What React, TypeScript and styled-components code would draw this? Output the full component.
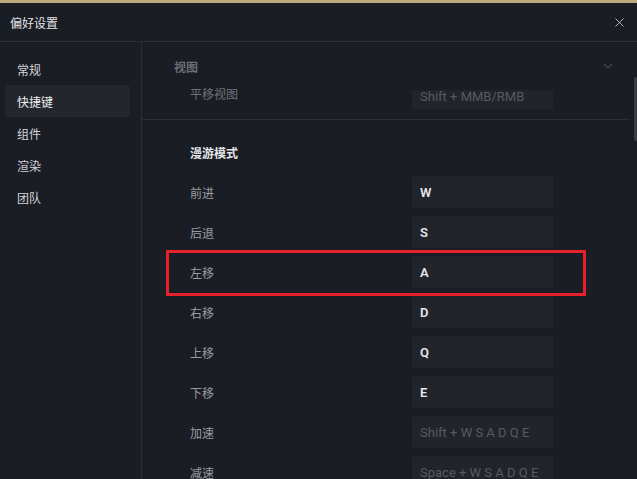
import React from 'react';
import styled, { createGlobalStyle } from 'styled-components';
import { ChevronDown, X } from 'lucide-react';

const GlobalStyle = createGlobalStyle`
  html, body {
    margin: 0;
    padding: 0;
    background: #1b1d25;
    overflow: hidden;
  }
  * {
    box-sizing: border-box;
  }
`;

const Window = styled.div`
  width: 637px;
  height: 479px;
  display: flex;
  flex-direction: column;
  background: #1b1d25;
  font-family: Roboto, "Noto Sans CJK SC", sans-serif;
  font-size: 12px;
  color: #d4d6da;
  overflow: hidden;
`;

const TopStrip = styled.div`
  height: 3px;
  background: #bcaa7b;
  flex-shrink: 0;
`;

const Header = styled.div`
  height: 39px;
  flex-shrink: 0;
  display: flex;
  align-items: center;
  justify-content: space-between;
  padding: 0 10px;
  border-bottom: 1px solid #2b2e36;
  color: #e2e3e6;
  font-size: 12px;
`;

const CloseButton = styled.button`
  display: flex;
  align-items: center;
  justify-content: center;
  background: none;
  border: none;
  padding: 0;
  color: #c9cacd;
  cursor: pointer;
`;

const Body = styled.div`
  flex: 1;
  display: flex;
  min-height: 0;
`;

const Sidebar = styled.div`
  width: 142px;
  flex-shrink: 0;
  border-right: 1px solid #2b2e36;
  padding: 11px 11px 0 5px;
  display: flex;
  flex-direction: column;
`;

const NavItem = styled.div<{ $active?: boolean }>`
  height: 32px;
  display: flex;
  align-items: center;
  padding-left: 12px;
  border-radius: 4px;
  background: ${(p) => (p.$active ? '#24262e' : 'transparent')};
  color: ${(p) => (p.$active ? '#eceef0' : '#d2d4d8')};
  font-size: 12px;
`;

const Content = styled.div`
  flex: 1;
  position: relative;
  display: flex;
  flex-direction: column;
  overflow: hidden;
`;

const SectionHeader = styled.div`
  height: 48px;
  flex-shrink: 0;
  display: flex;
  align-items: center;
  justify-content: space-between;
  padding: 0 22px 0 32px;
  color: #6c6f77;
  font-weight: 700;
  font-size: 12px;
`;

const Group = styled.div<{ $divider?: boolean }>`
  display: flex;
  flex-direction: column;
  gap: 8px;
  padding-bottom: 9px;
  margin-right: 7px;
  border-bottom: ${(p) => (p.$divider ? '1px solid #2b2e36' : 'none')};
`;

const GroupTitle = styled.div`
  height: 16px;
  display: flex;
  align-items: center;
  padding-left: 48px;
  margin: 24px 0 16px;
  color: #e4e5e8;
  font-weight: 700;
  font-size: 12px;
`;

/* $cut: the row is half scrolled under the sticky section header */
const Row = styled.div<{ $cut?: boolean }>`
  height: ${(p) => (p.$cut ? '20px' : '32px')};
  flex-shrink: 0;
  display: flex;
  align-items: ${(p) => (p.$cut ? 'flex-start' : 'center')};
  padding-left: 48px;
`;

const Label = styled.div<{ $cut?: boolean }>`
  width: 222px;
  color: ${(p) => (p.$cut ? '#6f727a' : '#9b9da3')};
  font-size: 12px;
  line-height: ${(p) => (p.$cut ? '12px' : 'normal')};
  margin-top: ${(p) => (p.$cut ? '-1px' : '0')};
`;

const KeyBox = styled.div<{ $placeholder?: boolean; $cut?: boolean }>`
  width: 141px;
  height: ${(p) => (p.$cut ? '20px' : '32px')};
  display: flex;
  align-items: ${(p) => (p.$cut ? 'flex-start' : 'center')};
  padding-left: 8px;
  border-radius: ${(p) => (p.$cut ? '0 0 2px 2px' : '2px')};
  background: #22242c;
  color: ${(p) => (p.$placeholder ? '#575a62' : '#e6e7ea')};
  font-weight: ${(p) => (p.$placeholder ? 400 : 600)};
  font-size: 13px;
  line-height: ${(p) => (p.$cut ? '13px' : 'normal')};
  white-space: nowrap;
`;

const Highlight = styled.div`
  position: absolute;
  left: 24px;
  top: 208px;
  width: 420px;
  height: 46px;
  border: 3px solid #e5222b;
  pointer-events: none;
`;

const ScrollThumb = styled.div`
  position: absolute;
  right: 0;
  top: 35px;
  width: 3px;
  height: 64px;
  border-radius: 2px;
  background: #3a3d45;
`;

const navItems = ['常规', '快捷键', '组件', '渲染', '团队'];

const roamRows: { label: string; value: string; placeholder?: boolean }[] = [
  { label: '前进', value: 'W' },
  { label: '后退', value: 'S' },
  { label: '左移', value: 'A' },
  { label: '右移', value: 'D' },
  { label: '上移', value: 'Q' },
  { label: '下移', value: 'E' },
  { label: '加速', value: 'Shift + W S A D Q E', placeholder: true },
  { label: '减速', value: 'Space + W S A D Q E', placeholder: true },
];

export default function App() {
  return (
    <>
      <GlobalStyle />
      <Window>
        <TopStrip />
        <Header>
          <span>偏好设置</span>
          <CloseButton aria-label="关闭">
            <X size={15} strokeWidth={1.4} />
          </CloseButton>
        </Header>
        <Body>
          <Sidebar>
            {navItems.map((item) => (
              <NavItem key={item} $active={item === '快捷键'}>
                {item}
              </NavItem>
            ))}
          </Sidebar>
          <Content>
            <SectionHeader>
              <span>视图</span>
              <ChevronDown size={14} strokeWidth={1.5} color="#6c6f77" />
            </SectionHeader>
            <Group $divider>
              <Row $cut>
                <Label $cut>平移视图</Label>
                <KeyBox $cut $placeholder>
                  Shift + MMB/RMB
                </KeyBox>
              </Row>
            </Group>
            <GroupTitle>漫游模式</GroupTitle>
            <Group>
              {roamRows.map((row) => (
                <Row key={row.label}>
                  <Label>{row.label}</Label>
                  <KeyBox $placeholder={row.placeholder}>{row.value}</KeyBox>
                </Row>
              ))}
            </Group>
            <Highlight />
            <ScrollThumb />
          </Content>
        </Body>
      </Window>
    </>
  );
}
